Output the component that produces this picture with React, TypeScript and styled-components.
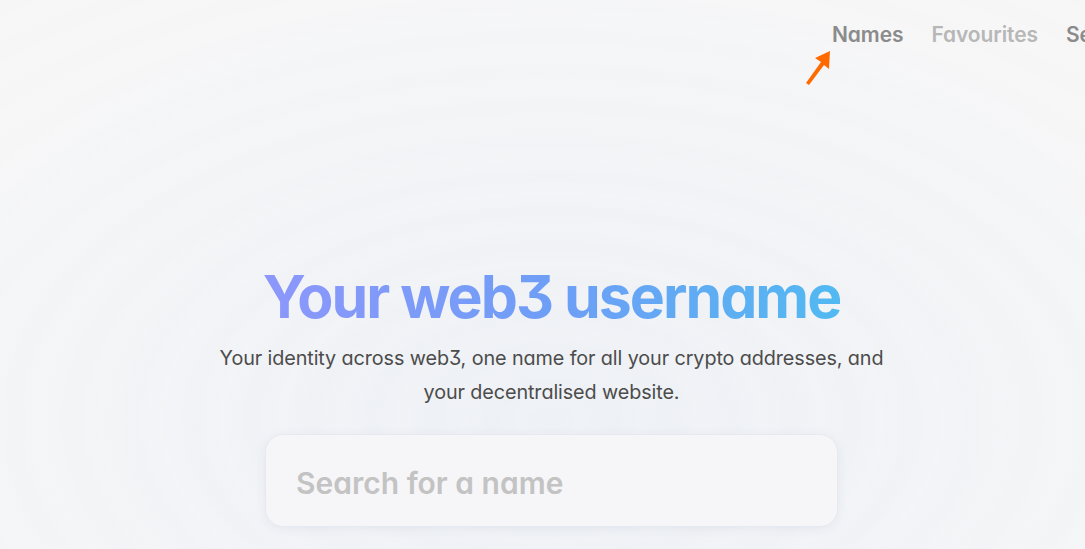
import React from "react";
import styled, { createGlobalStyle } from "styled-components";

const GlobalStyle = createGlobalStyle`
  html, body {
    margin: 0;
    padding: 0;
  }
  body {
    font-family: Inter, "Noto Sans", sans-serif;
    font-feature-settings: "cv11", "ss01";
  }
`;

const Page = styled.div`
  position: relative;
  width: 1085px;
  height: 549px;
  overflow: hidden;
  background: repeating-radial-gradient(
      ellipse 620px 360px at 552px 420px,
      rgba(255, 255, 255, 0) 0px,
      rgba(255, 255, 255, 0.14) 30px,
      rgba(255, 255, 255, 0) 60px
    ),
    radial-gradient(ellipse 700px 460px at 552px 430px, #edf0f5 0%, #f1f3f6 55%, #f6f6f7 100%);
  display: flex;
  flex-direction: column;
`;

const Header = styled.header`
  display: flex;
  justify-content: flex-start;
  padding: 22px 0 0 832px;
  height: 50px;
  box-sizing: border-box;
`;

const Nav = styled.nav`
  display: flex;
  gap: 28px;
  white-space: nowrap;
`;

const NavLink = styled.a<{ $muted?: boolean }>`
  font-size: 21px;
  font-weight: 600;
  letter-spacing: -0.1px;
  color: ${(p) => (p.$muted ? "#b7b7b7" : "#8b8b8b")};
  text-decoration: none;
  cursor: pointer;
`;

const Arrow = styled.svg`
  position: absolute;
  left: 803px;
  top: 48px;
`;

const Hero = styled.main`
  display: flex;
  flex-direction: column;
  align-items: center;
  padding: 212px 0 0 18px;
`;

const Title = styled.h1`
  margin: 0;
  font-size: 59px;
  font-weight: 700;
  letter-spacing: -2px;
  line-height: 70px;
  background: linear-gradient(90deg, #8d97fb 0%, #6e9ef6 50%, #52b9f1 100%);
  -webkit-background-clip: text;
  background-clip: text;
  color: transparent;
`;

const Subtitle = styled.p`
  margin: 9px 0 0 0;
  width: 680px;
  text-align: center;
  font-size: 19.8px;
  line-height: 34px;
  font-weight: 400;
  letter-spacing: -0.1px;
  color: #4c4c4c;
`;

const SearchBox = styled.div`
  margin-top: 25px;
  width: 573px;
  height: 93px;
  box-sizing: border-box;
  border-radius: 18px;
  background: #f6f6f8;
  border: 1px solid #e6e9ef;
  box-shadow: 0 2px 10px rgba(200, 208, 222, 0.35);
  display: flex;
  align-items: center;
  padding: 4px 28px 0 28px;
`;

const SearchInput = styled.input`
  flex: 1;
  border: none;
  outline: none;
  background: transparent;
  font-family: inherit;
  font-feature-settings: "cv11", "ss01";
  font-size: 30px;
  font-weight: 600;
  letter-spacing: 0;
  color: #333;
  &::placeholder {
    color: #c3c3c3;
  }
`;

export default function App() {
  return (
    <>
      <GlobalStyle />
      <Page>
        <Header>
          <Nav>
            <NavLink>Names</NavLink>
            <NavLink $muted>Favourites</NavLink>
            <NavLink>Settings</NavLink>
          </Nav>
        </Header>
        <Arrow width="32" height="40" viewBox="0 0 32 40">
          <path d="M27 3 L26 21 L21 17 L6 37 L3 35 L18 14 L12 10 Z" fill="#ff6a00" />
        </Arrow>
        <Hero>
          <Title>Your web3 username</Title>
          <Subtitle>
            Your identity across web3, one name for all your crypto addresses, and your
            decentralised website.
          </Subtitle>
          <SearchBox>
            <SearchInput placeholder="Search for a name" />
          </SearchBox>
        </Hero>
      </Page>
    </>
  );
}
